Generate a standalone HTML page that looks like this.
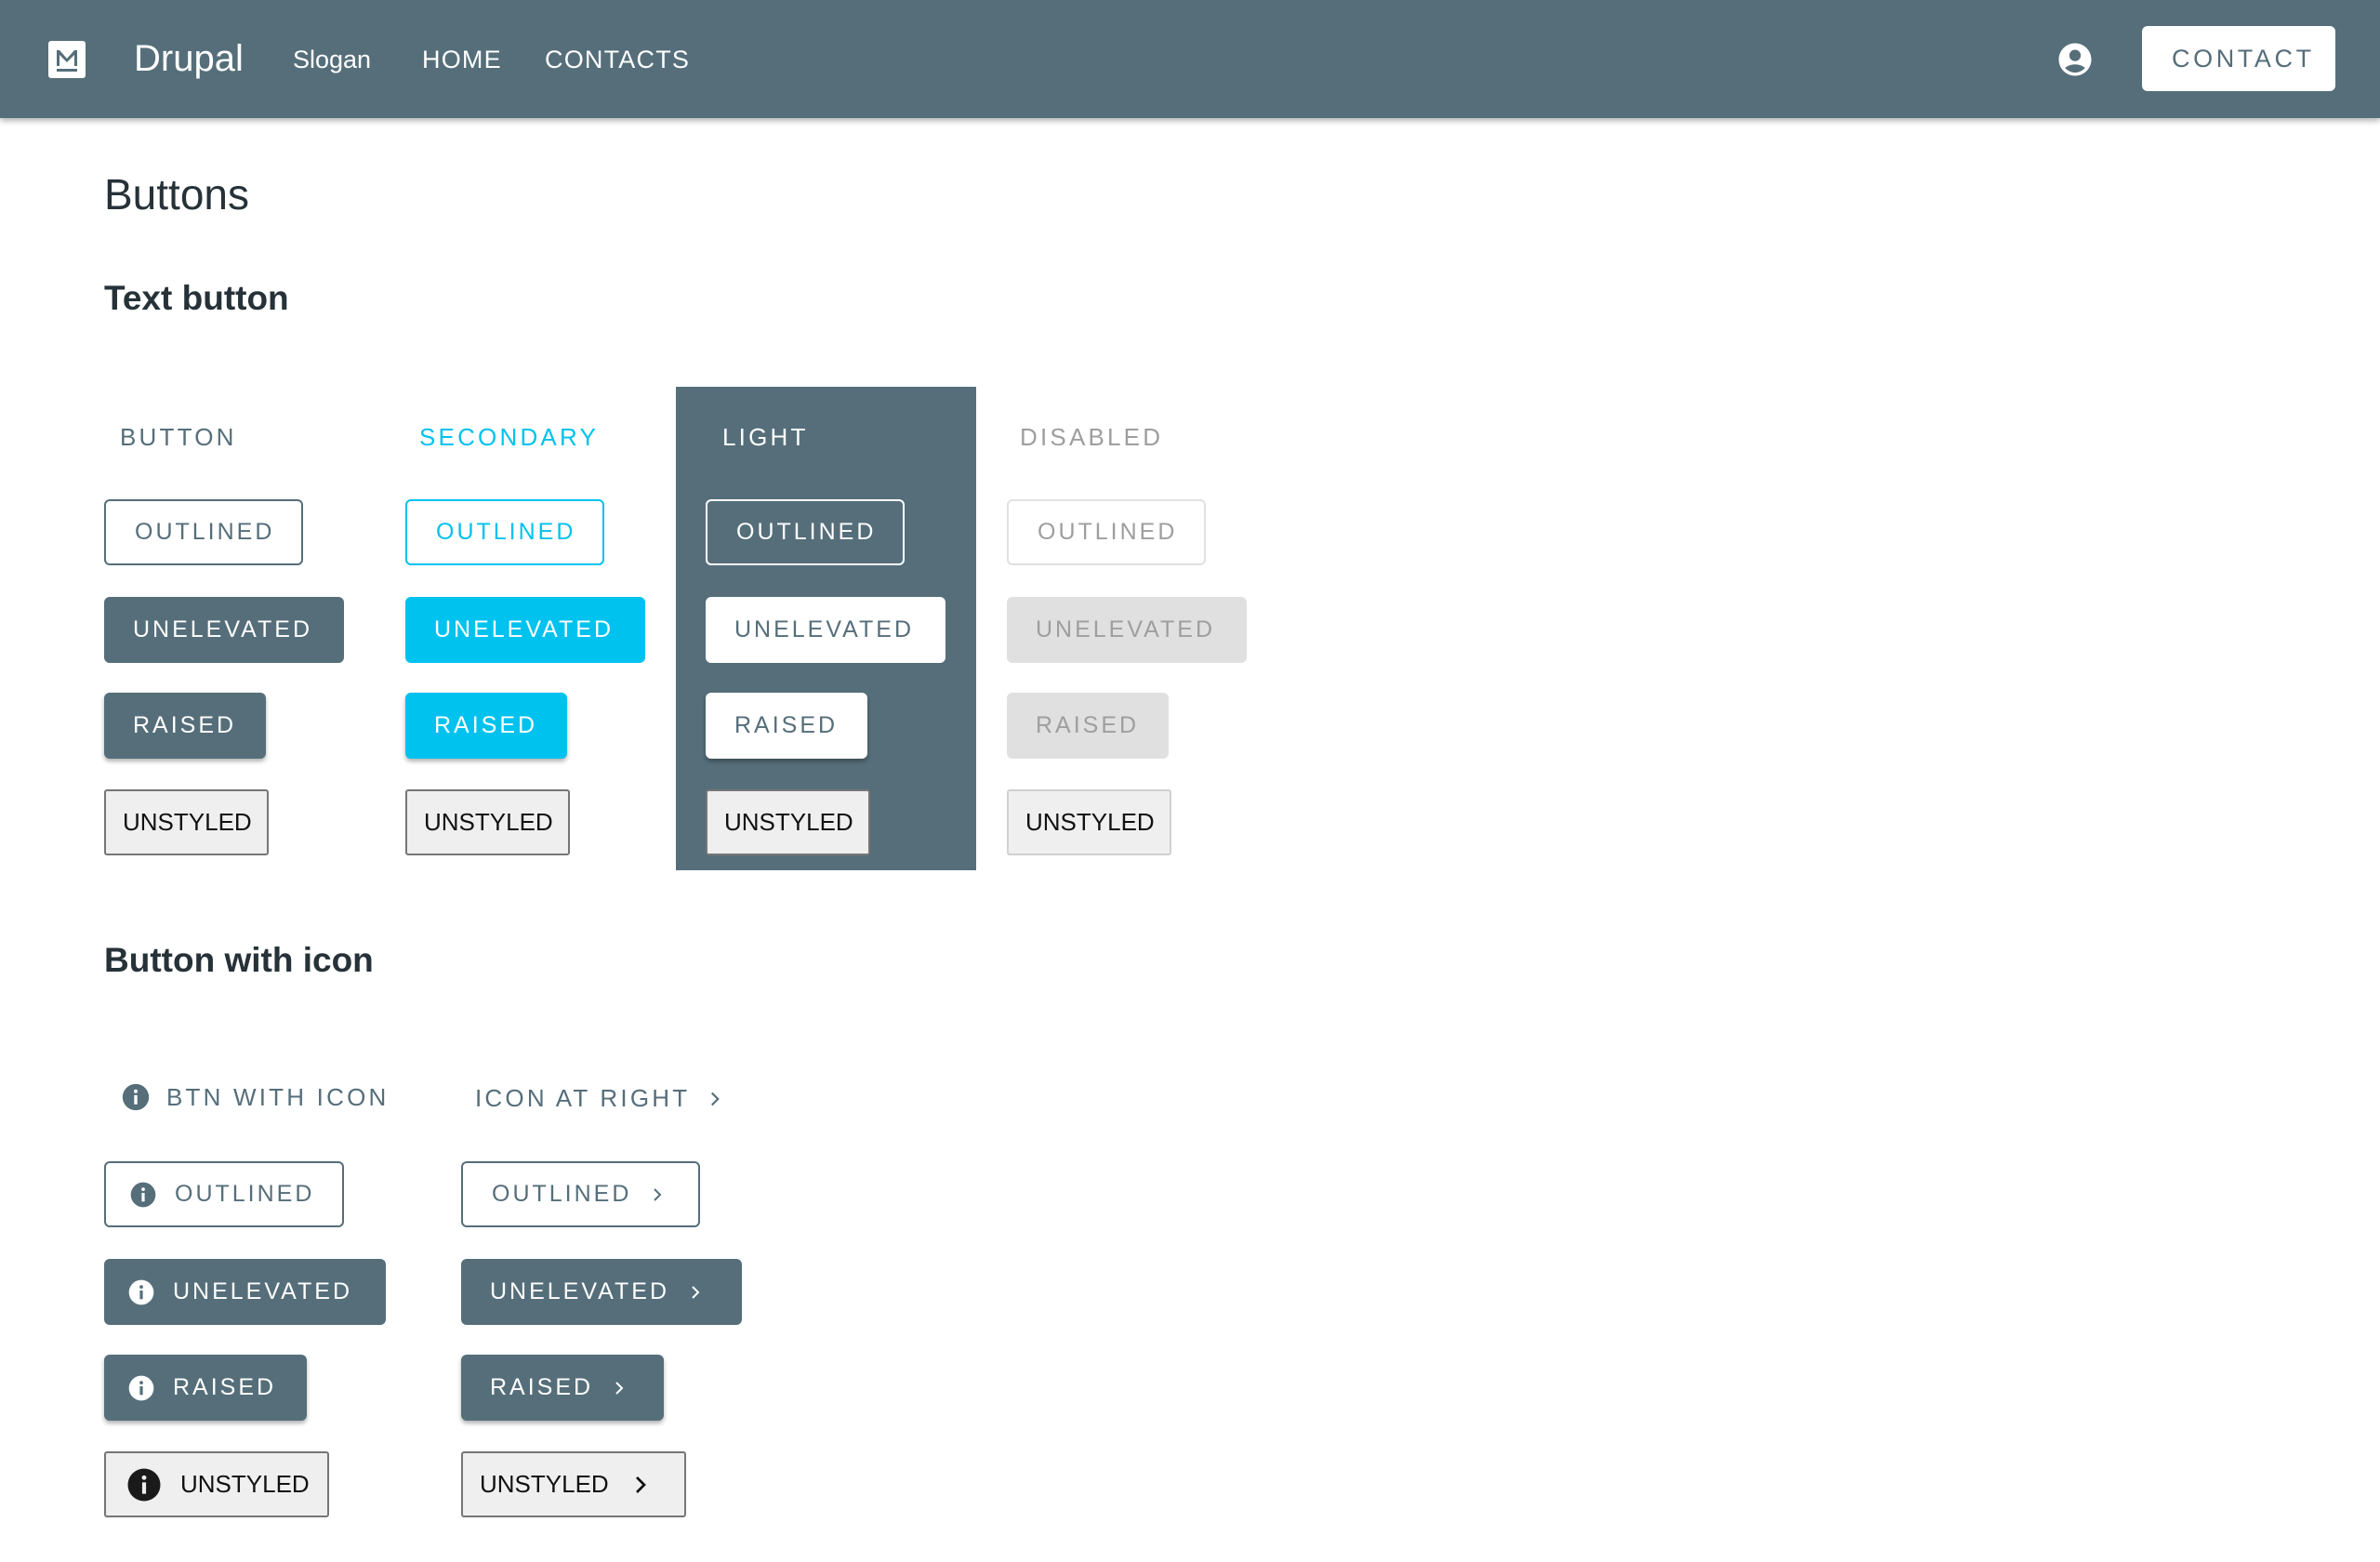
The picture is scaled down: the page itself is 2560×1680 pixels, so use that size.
<!DOCTYPE html>
<html><head><meta charset="utf-8"><style>
*{margin:0;padding:0;box-sizing:border-box}
body{width:2560px;height:1680px;background:#fff;font-family:"Liberation Sans",sans-serif;position:relative;overflow:hidden;color:#263238}
.hdr{position:absolute;left:0;top:0;width:2560px;height:127px;background:#556e7a;box-shadow:0 3px 6px rgba(0,0,0,.3)}
.a{position:absolute;white-space:nowrap}
.b{position:absolute;height:71px;display:flex;align-items:center;border-radius:6px;font-size:25px;letter-spacing:3px;padding-left:31px;white-space:nowrap}
.o{border:2px solid #556e7a;color:#556e7a;background:#fff}
.f{background:#556e7a;color:#fff}
.r{box-shadow:0 3px 5px rgba(0,0,0,.3)}
.u{background:#efefef;border:2px solid #767676;color:#111;letter-spacing:0;font-size:26px;padding-left:18px;border-radius:3px}
.lab{position:absolute;font-size:26px;letter-spacing:3.2px}
.ic{display:inline-block;margin-right:18px}
</style></head><body>
<div class="hdr">
<svg class="a" style="left:52px;top:44px" width="40" height="40" viewBox="0 0 40 40"><rect width="40" height="40" rx="3" fill="#fff"/><path d="M9 27V10h3l8 9 8-9h3v17h-3V15l-8 8-8-8v12z" fill="#556e7a"/><rect x="9" y="30" width="22" height="3" fill="#556e7a"/></svg>
<div class="a" style="left:144px;top:41px;font-size:40px;color:#fff">Drupal</div>
<div class="a" style="left:315px;top:49px;font-size:27px;color:#fff">Slogan</div>
<div class="a" style="left:454px;top:49px;font-size:27px;color:#fff;letter-spacing:1.2px">HOME</div>
<div class="a" style="left:586px;top:49px;font-size:27px;color:#fff;letter-spacing:1.2px">CONTACTS</div>
<svg class="a" style="left:2211px;top:43px" width="42" height="42" viewBox="0 0 24 24"><path fill="#fff" d="M12 2C6.48 2 2 6.48 2 12s4.48 10 10 10 10-4.48 10-10S17.52 2 12 2zm0 4c1.930 0 3.5 1.57 3.5 3.5S13.93 13 12 13s-3.5-1.57-3.5-3.5S10.07 6 12 6zm0 14c-2.03 0-4.43-.82-6.14-2.88C7.550 15.8 9.68 15 12 15s4.45.8 6.14 2.12C16.43 19.18 14.03 20 12 20z"/></svg>
<div class="b" style="left:2304px;top:28px;width:208px;height:70px;background:#fff;color:#556e7a;font-size:27px;letter-spacing:3.6px;padding-left:32px">CONTACT</div>
</div>

<div class="a" style="left:112px;top:182px;font-size:46px;color:#263238">Buttons</div>
<div class="a" style="left:112px;top:300px;font-size:37px;color:#263238;font-weight:bold">Text button</div>

<div class="a" style="left:727px;top:416px;width:323px;height:520px;background:#556e7a"></div>

<div class="lab" style="left:129px;top:455px;color:#556e7a">BUTTON</div>
<div class="lab" style="left:451px;top:455px;color:#00c2ee">SECONDARY</div>
<div class="lab" style="left:777px;top:455px;color:#fff">LIGHT</div>
<div class="lab" style="left:1097px;top:455px;color:#9e9e9e">DISABLED</div>

<div class="b o" style="left:112px;top:537px;width:214px">OUTLINED</div>
<div class="b f" style="left:112px;top:642px;width:258px">UNELEVATED</div>
<div class="b f r" style="left:112px;top:745px;width:174px">RAISED</div>
<div class="b u" style="left:112px;top:849px;width:177px">UNSTYLED</div>

<div class="b o" style="left:436px;top:537px;width:214px;border-color:#00c2ee;color:#00c2ee">OUTLINED</div>
<div class="b" style="left:436px;top:642px;width:258px;background:#00c2ee;color:#fff">UNELEVATED</div>
<div class="b r" style="left:436px;top:745px;width:174px;background:#00c2ee;color:#fff">RAISED</div>
<div class="b u" style="left:436px;top:849px;width:177px">UNSTYLED</div>

<div class="b" style="left:759px;top:537px;width:214px;border:2px solid #fff;color:#fff">OUTLINED</div>
<div class="b" style="left:759px;top:642px;width:258px;background:#fff;color:#556e7a">UNELEVATED</div>
<div class="b r" style="left:759px;top:745px;width:174px;background:#fff;color:#556e7a">RAISED</div>
<div class="b u" style="left:759px;top:849px;width:177px">UNSTYLED</div>

<div class="b" style="left:1083px;top:537px;width:214px;border:2px solid #e0e0e0;color:#9e9e9e">OUTLINED</div>
<div class="b" style="left:1083px;top:642px;width:258px;background:#e0e0e0;color:#9e9e9e">UNELEVATED</div>
<div class="b" style="left:1083px;top:745px;width:174px;background:#e0e0e0;color:#9e9e9e">RAISED</div>
<div class="b u" style="left:1083px;top:849px;width:177px;border-color:#d0d0d0">UNSTYLED</div>

<div class="a" style="left:112px;top:1012px;font-size:37px;color:#263238;font-weight:bold">Button with icon</div>

<svg width="0" height="0" style="position:absolute"><defs>
<symbol id="info" viewBox="0 0 24 24"><circle cx="12" cy="12" r="10" fill="currentColor"/><rect x="10.8" y="10.5" width="2.4" height="7" fill="var(--bg)"/><circle cx="12" cy="7.6" r="1.4" fill="var(--bg)"/></symbol>
<symbol id="chev" viewBox="0 0 24 24"><path d="M9 6l6 6-6 6" fill="none" stroke="currentColor" stroke-width="2"/></symbol>
</defs></svg>

<div class="lab" style="left:129px;top:1163px;color:#556e7a;display:flex;align-items:center"><svg class="ic" width="34" height="34" style="--bg:#fff;color:#556e7a;margin-right:16px"><use href="#info"/></svg>BTN WITH ICON</div>
<div class="lab" style="left:511px;top:1166px;color:#556e7a;display:flex;align-items:center">ICON AT RIGHT<svg width="26" height="26" style="margin-left:14px;color:#556e7a"><use href="#chev"/></svg></div>

<div class="b o" style="left:112px;top:1249px;width:258px;padding-left:24px"><svg class="ic" width="32" height="32" style="--bg:#fff;color:#556e7a;margin-right:18px"><use href="#info"/></svg>OUTLINED</div>
<div class="b f" style="left:112px;top:1354px;width:303px;padding-left:24px"><svg class="ic" width="32" height="32" style="--bg:#556e7a;color:#fff;margin-right:18px"><use href="#info"/></svg>UNELEVATED</div>
<div class="b f r" style="left:112px;top:1457px;width:218px;padding-left:24px"><svg class="ic" width="32" height="32" style="--bg:#556e7a;color:#fff;margin-right:18px"><use href="#info"/></svg>RAISED</div>
<div class="b u" style="left:112px;top:1561px;width:242px;padding-left:20px"><svg class="ic" width="42" height="42" style="--bg:#efefef;color:#1a1a1a;margin-right:18px"><use href="#info"/></svg>UNSTYLED</div>

<div class="b o" style="left:496px;top:1249px;width:257px">OUTLINED<svg width="24" height="24" style="margin-left:16px;color:#556e7a"><use href="#chev"/></svg></div>
<div class="b f" style="left:496px;top:1354px;width:302px">UNELEVATED<svg width="24" height="24" style="margin-left:16px;color:#fff"><use href="#chev"/></svg></div>
<div class="b f r" style="left:496px;top:1457px;width:218px">RAISED<svg width="24" height="24" style="margin-left:16px;color:#fff"><use href="#chev"/></svg></div>
<div class="b u" style="left:496px;top:1561px;width:242px">UNSTYLED<svg width="32" height="32" style="margin-left:18px;color:#111"><use href="#chev"/></svg></div>
</body></html>
